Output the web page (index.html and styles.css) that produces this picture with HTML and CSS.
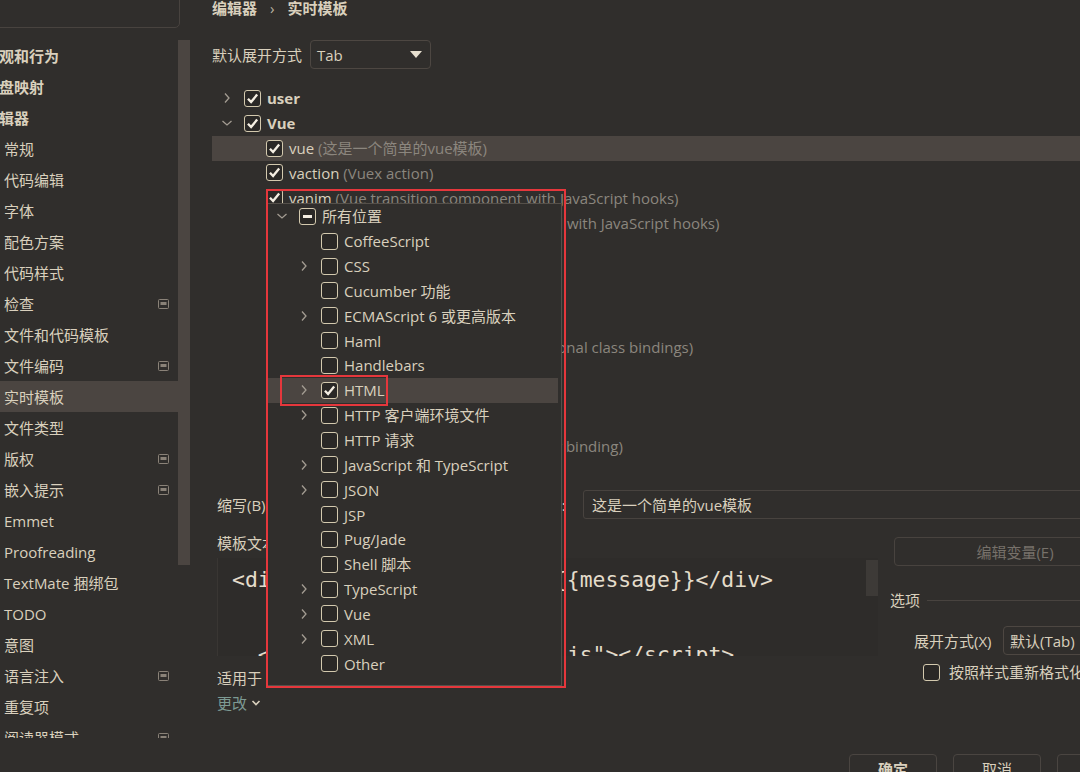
FILE: index.html
```html
<!DOCTYPE html>
<html lang="zh-CN">
<head>
<meta charset="utf-8">
<title>实时模板</title>
<link rel="stylesheet" href="styles.css">
</head>
<body>
<div class="app">
  <aside class="sidebar">
    <div class="search"></div>
    <div class="nav-wrap">
      <ul class="nav">
        <li class="nav-item top"><span class="cut">外观和行为</span></li>
        <li class="nav-item top"><span class="cut">键盘映射</span></li>
        <li class="nav-item top"><span class="cut">编辑器</span></li>
        <li class="nav-item">常规</li>
        <li class="nav-item">代码编辑</li>
        <li class="nav-item">字体</li>
        <li class="nav-item">配色方案</li>
        <li class="nav-item">代码样式</li>
        <li class="nav-item">检查<svg class="nav-icon" width="11" height="10" viewBox="0 0 11 10"><rect x="0.5" y="0.5" width="10" height="9" rx="1" fill="none" stroke="#8a8278"/><rect x="2.5" y="3" width="6" height="3" fill="#8a8278"/></svg></li>
        <li class="nav-item">文件和代码模板</li>
        <li class="nav-item">文件编码<svg class="nav-icon" width="11" height="10" viewBox="0 0 11 10"><rect x="0.5" y="0.5" width="10" height="9" rx="1" fill="none" stroke="#8a8278"/><rect x="2.5" y="3" width="6" height="3" fill="#8a8278"/></svg></li>
        <li class="nav-item selected">实时模板</li>
        <li class="nav-item">文件类型</li>
        <li class="nav-item">版权<svg class="nav-icon" width="11" height="10" viewBox="0 0 11 10"><rect x="0.5" y="0.5" width="10" height="9" rx="1" fill="none" stroke="#8a8278"/><rect x="2.5" y="3" width="6" height="3" fill="#8a8278"/></svg></li>
        <li class="nav-item">嵌入提示<svg class="nav-icon" width="11" height="10" viewBox="0 0 11 10"><rect x="0.5" y="0.5" width="10" height="9" rx="1" fill="none" stroke="#8a8278"/><rect x="2.5" y="3" width="6" height="3" fill="#8a8278"/></svg></li>
        <li class="nav-item">Emmet</li>
        <li class="nav-item">Proofreading</li>
        <li class="nav-item">TextMate 捆绑包</li>
        <li class="nav-item">TODO</li>
        <li class="nav-item">意图</li>
        <li class="nav-item">语言注入<svg class="nav-icon" width="11" height="10" viewBox="0 0 11 10"><rect x="0.5" y="0.5" width="10" height="9" rx="1" fill="none" stroke="#8a8278"/><rect x="2.5" y="3" width="6" height="3" fill="#8a8278"/></svg></li>
        <li class="nav-item">重复项</li>
        <li class="nav-item">阅读器模式<svg class="nav-icon" width="11" height="10" viewBox="0 0 11 10"><rect x="0.5" y="0.5" width="10" height="9" rx="1" fill="none" stroke="#8a8278"/><rect x="2.5" y="3" width="6" height="3" fill="#8a8278"/></svg></li>
      </ul>
      <div class="scroll"><div class="scroll-thumb"></div></div>
    </div>
  </aside>

  <main class="main">
    <div class="crumb"><span>编辑器</span><span class="crumb-sep">›</span><span>实时模板</span></div>

    <div class="expand-row">
      <span class="label">默认展开方式</span>
      <div class="select select-tab"><span>Tab</span><svg class="tri" width="12" height="7" viewBox="0 0 12 7"><path d="M0 0 H12 L6 7 Z" fill="#e6dfcf"/></svg></div>
    </div>

    <div class="tree">
      <div class="row lv0"><span class="chev"><svg width="16" height="16" viewBox="0 0 16 16"><path d="M6 3.5 L10 8 L6 12.5" fill="none" stroke="#a39c92" stroke-width="1.3"/></svg></span><span class="cb"><svg viewBox="0 0 12 12"><path d="M1.8 6.2 L4.7 9.2 L10.3 2.4" fill="none" stroke="#f4eee2" stroke-width="2.2"/></svg></span><span class="name bold">user</span></div>
      <div class="row lv0"><span class="chev"><svg width="16" height="16" viewBox="0 0 16 16"><path d="M3.5 6 L8 10 L12.5 6" fill="none" stroke="#a39c92" stroke-width="1.3"/></svg></span><span class="cb"><svg viewBox="0 0 12 12"><path d="M1.8 6.2 L4.7 9.2 L10.3 2.4" fill="none" stroke="#f4eee2" stroke-width="2.2"/></svg></span><span class="name bold">Vue</span></div>
      <div class="row lv1 selected"><span class="chev"></span><span class="cb"><svg viewBox="0 0 12 12"><path d="M1.8 6.2 L4.7 9.2 L10.3 2.4" fill="none" stroke="#f4eee2" stroke-width="2.2"/></svg></span><span class="name">vue <span class="desc">(这是一个简单的vue模板)</span></span></div>
      <div class="row lv1"><span class="chev"></span><span class="cb"><svg viewBox="0 0 12 12"><path d="M1.8 6.2 L4.7 9.2 L10.3 2.4" fill="none" stroke="#f4eee2" stroke-width="2.2"/></svg></span><span class="name">vaction <span class="desc">(Vuex action)</span></span></div>
      <div class="row lv1"><span class="chev"></span><span class="cb"><svg viewBox="0 0 12 12"><path d="M1.8 6.2 L4.7 9.2 L10.3 2.4" fill="none" stroke="#f4eee2" stroke-width="2.2"/></svg></span><span class="name">vanim <span class="desc">(Vue transition component with JavaScript hooks)</span></span></div>
      <div class="row lv1"><span class="chev"></span><span class="cb"><svg viewBox="0 0 12 12"><path d="M1.8 6.2 L4.7 9.2 L10.3 2.4" fill="none" stroke="#f4eee2" stroke-width="2.2"/></svg></span><span class="name">vanimgroup <span class="desc">(Vue transition-group child with JavaScript hooks)</span></span></div>
      <div class="row lv1"><span class="chev"></span><span class="cb"><svg viewBox="0 0 12 12"><path d="M1.8 6.2 L4.7 9.2 L10.3 2.4" fill="none" stroke="#f4eee2" stroke-width="2.2"/></svg></span><span class="name">vbind <span class="desc">(Vue v-bind)</span></span></div>
      <div class="row lv1"><span class="chev"></span><span class="cb"><svg viewBox="0 0 12 12"><path d="M1.8 6.2 L4.7 9.2 L10.3 2.4" fill="none" stroke="#f4eee2" stroke-width="2.2"/></svg></span><span class="name">vcomputed <span class="desc">(Vue computed property)</span></span></div>
      <div class="row lv1"><span class="chev"></span><span class="cb"><svg viewBox="0 0 12 12"><path d="M1.8 6.2 L4.7 9.2 L10.3 2.4" fill="none" stroke="#f4eee2" stroke-width="2.2"/></svg></span><span class="name">vdata <span class="desc">(Vue component data)</span></span></div>
      <div class="row lv1"><span class="chev"></span><span class="cb"><svg viewBox="0 0 12 12"><path d="M1.8 6.2 L4.7 9.2 L10.3 2.4" fill="none" stroke="#f4eee2" stroke-width="2.2"/></svg></span><span class="name">vfilter <span class="desc">(Vue filter)</span></span></div>
      <div class="row lv1"><span class="chev"></span><span class="cb"><svg viewBox="0 0 12 12"><path d="M1.8 6.2 L4.7 9.2 L10.3 2.4" fill="none" stroke="#f4eee2" stroke-width="2.2"/></svg></span><span class="name">vclassobj <span class="desc">(Vue v-bind:class with conditional class bindings)</span></span></div>
      <div class="row lv1"><span class="chev"></span><span class="cb"><svg viewBox="0 0 12 12"><path d="M1.8 6.2 L4.7 9.2 L10.3 2.4" fill="none" stroke="#f4eee2" stroke-width="2.2"/></svg></span><span class="name">vfor <span class="desc">(Vue v-for directive)</span></span></div>
      <div class="row lv1"><span class="chev"></span><span class="cb"><svg viewBox="0 0 12 12"><path d="M1.8 6.2 L4.7 9.2 L10.3 2.4" fill="none" stroke="#f4eee2" stroke-width="2.2"/></svg></span><span class="name">vif <span class="desc">(Vue v-if directive)</span></span></div>
      <div class="row lv1"><span class="chev"></span><span class="cb"><svg viewBox="0 0 12 12"><path d="M1.8 6.2 L4.7 9.2 L10.3 2.4" fill="none" stroke="#f4eee2" stroke-width="2.2"/></svg></span><span class="name">vmethod <span class="desc">(Vue method)</span></span></div>
      <div class="row lv1"><span class="chev"></span><span class="cb"><svg viewBox="0 0 12 12"><path d="M1.8 6.2 L4.7 9.2 L10.3 2.4" fill="none" stroke="#f4eee2" stroke-width="2.2"/></svg></span><span class="name">vmodel <span class="desc">(Vue v-model directive two-way binding)</span></span></div>
    </div>

    <div class="abbr-row">
      <span class="label abbr-label">缩写(B):</span>
      <div class="input abbr-input">vue</div>
      <span class="label desc-label">描述(D):</span>
      <div class="input desc-input">这是一个简单的vue模板</div>
    </div>

    <div class="content">
      <div class="left">
        <div class="label text-label">模板文本(T):</div>
        <div class="editor">
          <pre class="code">&lt;div id="main" class="a"&gt;{{message}}&lt;/div&gt;

  &lt;script src="../vue.min.js"&gt;&lt;/script&gt;</pre>
          <div class="editor-thumb"></div>
        </div>
        <div class="label apply-label">适用于</div>
        <div class="change">更改 <svg width="10" height="8" viewBox="0 0 10 8"><path d="M1.5 2 L5 5.5 L8.5 2" fill="none" stroke="#d8cfbc" stroke-width="1.6"/></svg></div>
      </div>
      <div class="right">
        <div class="btn-vars">编辑变量(E)</div>
        <div class="opt-title"><span>选项</span><span class="opt-line"></span></div>
        <div class="opt-expand">
          <span class="label">展开方式(X)</span>
          <div class="select select-default">默认(Tab)</div>
        </div>
        <div class="opt-check">
          <span class="cb"></span>
          <span class="label">按照样式重新格式化</span>
        </div>
      </div>
    </div>

    <div class="footer">
      <div class="btn primary">确定</div>
      <div class="btn">取消</div>
      <div class="btn">应用</div>
    </div>
  </main>
</div>

<div class="popup">
  <div class="row plv0"><span class="chev"><svg width="16" height="16" viewBox="0 0 16 16"><path d="M3.5 6 L8 10 L12.5 6" fill="none" stroke="#a39c92" stroke-width="1.3"/></svg></span><span class="cb"><span class="minus"></span></span><span class="name">所有位置</span></div>
  <div class="row plv1"><span class="chev"></span><span class="cb"></span><span class="name">CoffeeScript</span></div>
  <div class="row plv1"><span class="chev"><svg width="16" height="16" viewBox="0 0 16 16"><path d="M6 3.5 L10 8 L6 12.5" fill="none" stroke="#a39c92" stroke-width="1.3"/></svg></span><span class="cb"></span><span class="name">CSS</span></div>
  <div class="row plv1"><span class="chev"></span><span class="cb"></span><span class="name">Cucumber 功能</span></div>
  <div class="row plv1"><span class="chev"><svg width="16" height="16" viewBox="0 0 16 16"><path d="M6 3.5 L10 8 L6 12.5" fill="none" stroke="#a39c92" stroke-width="1.3"/></svg></span><span class="cb"></span><span class="name">ECMAScript 6 或更高版本</span></div>
  <div class="row plv1"><span class="chev"></span><span class="cb"></span><span class="name">Haml</span></div>
  <div class="row plv1"><span class="chev"></span><span class="cb"></span><span class="name">Handlebars</span></div>
  <div class="row plv1 selected"><span class="chev"><svg width="16" height="16" viewBox="0 0 16 16"><path d="M6 3.5 L10 8 L6 12.5" fill="none" stroke="#a39c92" stroke-width="1.3"/></svg></span><span class="cb"><svg viewBox="0 0 12 12"><path d="M1.8 6.2 L4.7 9.2 L10.3 2.4" fill="none" stroke="#f4eee2" stroke-width="2.2"/></svg></span><span class="name">HTML</span></div>
  <div class="row plv1"><span class="chev"><svg width="16" height="16" viewBox="0 0 16 16"><path d="M6 3.5 L10 8 L6 12.5" fill="none" stroke="#a39c92" stroke-width="1.3"/></svg></span><span class="cb"></span><span class="name">HTTP 客户端环境文件</span></div>
  <div class="row plv1"><span class="chev"></span><span class="cb"></span><span class="name">HTTP 请求</span></div>
  <div class="row plv1"><span class="chev"><svg width="16" height="16" viewBox="0 0 16 16"><path d="M6 3.5 L10 8 L6 12.5" fill="none" stroke="#a39c92" stroke-width="1.3"/></svg></span><span class="cb"></span><span class="name">JavaScript 和 TypeScript</span></div>
  <div class="row plv1"><span class="chev"><svg width="16" height="16" viewBox="0 0 16 16"><path d="M6 3.5 L10 8 L6 12.5" fill="none" stroke="#a39c92" stroke-width="1.3"/></svg></span><span class="cb"></span><span class="name">JSON</span></div>
  <div class="row plv1"><span class="chev"></span><span class="cb"></span><span class="name">JSP</span></div>
  <div class="row plv1"><span class="chev"></span><span class="cb"></span><span class="name">Pug/Jade</span></div>
  <div class="row plv1"><span class="chev"></span><span class="cb"></span><span class="name">Shell 脚本</span></div>
  <div class="row plv1"><span class="chev"><svg width="16" height="16" viewBox="0 0 16 16"><path d="M6 3.5 L10 8 L6 12.5" fill="none" stroke="#a39c92" stroke-width="1.3"/></svg></span><span class="cb"></span><span class="name">TypeScript</span></div>
  <div class="row plv1"><span class="chev"><svg width="16" height="16" viewBox="0 0 16 16"><path d="M6 3.5 L10 8 L6 12.5" fill="none" stroke="#a39c92" stroke-width="1.3"/></svg></span><span class="cb"></span><span class="name">Vue</span></div>
  <div class="row plv1"><span class="chev"><svg width="16" height="16" viewBox="0 0 16 16"><path d="M6 3.5 L10 8 L6 12.5" fill="none" stroke="#a39c92" stroke-width="1.3"/></svg></span><span class="cb"></span><span class="name">XML</span></div>
  <div class="row plv1"><span class="chev"></span><span class="cb"></span><span class="name">Other</span></div>
</div>

<div class="mark mark-popup"></div>
<div class="mark mark-html"></div>
</body>
</html>
```

FILE: styles.css
```css
* { box-sizing: border-box; margin: 0; padding: 0; }

html, body {
  width: 1080px;
  height: 772px;
  overflow: hidden;
}

body {
  position: relative;
  background: #302e2c;
  color: #d9d0bd;
  font-family: "Open Sans", "Noto Sans CJK SC", sans-serif;
  font-size: 15px;
  line-height: 1.2;
}

.app {
  display: flex;
  height: 772px;
}

/* ---------- sidebar ---------- */
.sidebar {
  width: 190px;
  flex: none;
}

.search {
  margin: -10px 0 0 -10px;
  width: 190px;
  height: 38px;
  border: 1px solid #48433f;
  border-radius: 5px;
}

.nav-wrap {
  display: flex;
  margin-top: 12px;
}

.nav {
  list-style: none;
  width: 178px;
  height: 698px;
  overflow: hidden;
}

.nav-item {
  height: 31px;
  display: flex;
  align-items: center;
  padding-left: 4px;
  white-space: nowrap;
}

.nav-item.top {
  padding-left: 0;
  font-weight: 700;
}

.nav-item.top .cut {
  margin-left: -16px;
}

.nav-item.selected {
  background: #4b4541;
}

.nav-icon {
  margin-left: auto;
  margin-right: 9px;
  flex: none;
}

.scroll {
  width: 12px;
}

.scroll-thumb {
  height: 525px;
  background: #4b4541;
}

/* ---------- main ---------- */
.main {
  flex: 1;
  min-width: 0;
  margin-left: 22px;
}

.label {
  flex: none;
  white-space: nowrap;
}

.crumb {
  display: flex;
  height: 17px;
  line-height: 17px;
  font-weight: 700;
  white-space: nowrap;
}

.crumb-sep {
  margin: 0 13px;
  font-weight: 400;
  color: #bdb4a3;
}

.expand-row {
  display: flex;
  align-items: center;
  height: 29px;
  margin-top: 23px;
}

.expand-row .label {
  width: 98px;
}

.select {
  display: flex;
  align-items: center;
  flex: none;
  height: 29px;
  border: 1px solid #4d4742;
  border-radius: 4px;
  padding-left: 6px;
  white-space: nowrap;
}

.select-tab {
  width: 121px;
  justify-content: space-between;
  padding-right: 8px;
}

.tree {
  margin-top: 17px;
  height: 373px;
  overflow: hidden;
}

.row {
  height: 24.85px;
  display: flex;
  align-items: center;
  white-space: nowrap;
}

.row.selected {
  background: #4b4541;
}

.tree .lv0 { padding-left: 7px; }
.tree .lv1 { padding-left: 29px; }

.chev {
  width: 16px;
  height: 16px;
  flex: none;
  display: flex;
}

.cb {
  width: 17px;
  height: 17px;
  flex: none;
  margin-left: 9px;
  border: 1.6px solid #d3c9ae;
  border-radius: 3px;
  background: #2a2826;
  display: inline-flex;
  align-items: center;
  justify-content: center;
}

.cb svg {
  width: 13px;
  height: 13px;
}

.minus {
  width: 9px;
  height: 3px;
  background: #f4eee2;
}

.name {
  margin-left: 6px;
}

.bold {
  font-weight: 700;
}

.desc {
  color: #8b867e;
}

/* abbreviation row */
.abbr-row {
  display: flex;
  align-items: center;
  height: 29px;
  margin-top: 31px;
  padding-left: 5px;
  white-space: nowrap;
}

.abbr-label { width: 66px; }

.input {
  height: 29px;
  border: 1px solid #48433f;
  border-radius: 3px;
  padding-left: 8px;
  display: flex;
  align-items: center;
  white-space: nowrap;
  flex: none;
}

.abbr-input { width: 216px; }

.desc-label {
  width: 58px;
  margin-left: 13px;
}

.desc-input {
  width: 560px;
  margin-left: 13px;
}

/* content columns */
.content {
  display: flex;
}

.left {
  width: 666px;
  padding-left: 5px;
  flex: none;
}

.text-label {
  margin-top: 16px;
  line-height: 16px;
  height: 16px;
}

.editor {
  position: relative;
  margin-top: 7px;
  height: 98px;
  overflow: hidden;
  background: #2e2c2a;
  border-left: 1px solid #393633;
}

.code {
  font-family: "DejaVu Sans Mono", "Liberation Mono", monospace;
  font-size: 21.4px;
  line-height: 37.5px;
  padding: 3px 0 0 14px;
  color: #e4dccb;
}

.editor-thumb {
  position: absolute;
  right: 0;
  top: 2px;
  width: 12px;
  height: 36px;
  background: #3d3a37;
}

.apply-label {
  margin-top: 14px;
  line-height: 16px;
  height: 16px;
}

.change {
  display: flex;
  align-items: center;
  gap: 4px;
  margin-top: 9px;
  line-height: 16px;
  height: 16px;
  color: #7d9a93;
}

.right {
  margin-left: 12px;
  width: 340px;
  flex: none;
}

.btn-vars {
  margin: 18px 0 0 4px;
  width: 242px;
  height: 29px;
  border: 1px solid #48433f;
  border-radius: 4px;
  display: flex;
  align-items: center;
  justify-content: center;
  color: #77716a;
}

.opt-title {
  display: flex;
  align-items: center;
  margin-top: 26px;
  height: 16px;
}

.opt-line {
  flex: 1;
  margin-left: 7px;
  border-top: 1px solid #48433f;
}

.opt-expand {
  display: flex;
  align-items: center;
  margin-top: 18px;
  padding-left: 24px;
  height: 29px;
}

.opt-expand .label {
  width: 89px;
}

.select-default {
  width: 130px;
}

.opt-check {
  display: flex;
  align-items: center;
  margin-top: 9px;
  padding-left: 24px;
  height: 16px;
  white-space: nowrap;
}

.opt-check .label {
  margin-left: 9px;
}

/* footer */
.footer {
  display: flex;
  gap: 16px;
  margin: 43px 0 0 637px;
}

.btn {
  width: 88px;
  height: 30px;
  flex: none;
  border: 1px solid #4a4541;
  border-radius: 4px;
  display: flex;
  align-items: center;
  justify-content: center;
}

.btn.primary {
  font-weight: 700;
}

/* ---------- popup (overlay) ---------- */
.popup {
  position: absolute;
  left: 267px;
  top: 203px;
  width: 295px;
  height: 483px;
  background: #302e2c;
  border: 1px solid #55504a;
  padding-right: 3px;
}

.popup .plv0 { padding-left: 6px; }
.popup .plv1 { padding-left: 28px; }

/* ---------- annotation marks ---------- */
.mark {
  position: absolute;
  border: 2px solid #e5373c;
}

.mark-popup {
  left: 266px;
  top: 189px;
  width: 300px;
  height: 499px;
}

.mark-html {
  left: 280px;
  top: 375px;
  width: 108px;
  height: 31px;
}
```
